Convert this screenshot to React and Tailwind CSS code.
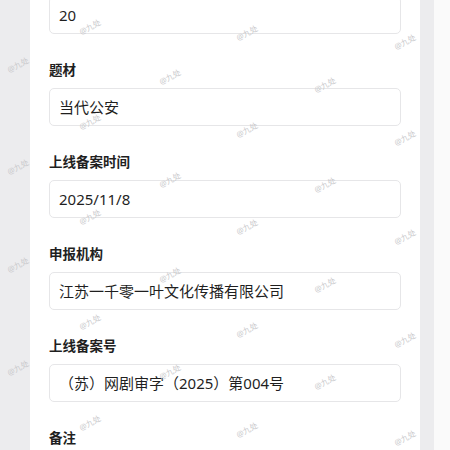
const fields = [
  { label: "题材", value: "当代公安" },
  { label: "上线备案时间", value: "2025/11/8" },
  { label: "申报机构", value: "江苏一千零一叶文化传播有限公司" },
  { label: "上线备案号", value: "（苏）网剧审字（2025）第004号" },
];

const marks = [
  [90, 27], [247, 33], [405, 42],
  [18, 65], [170, 77], [325, 85],
  [90, 122], [247, 130], [405, 138],
  [18, 167], [170, 180], [325, 185],
  [90, 217], [247, 227], [405, 237],
  [18, 265], [170, 275], [325, 285],
  [90, 322], [247, 330], [405, 340],
  [18, 368], [170, 372], [325, 382],
  [90, 423], [247, 430], [405, 438],
];

export default function App() {
  return (
    <div
      className="relative flex h-[450px] w-[450px] overflow-hidden bg-white text-[#1f1f1f]"
      style={{ fontFamily: '"Noto Sans", "Noto Sans CJK SC", sans-serif' }}
    >
      <div className="w-[30px] shrink-0 bg-[#ececee]" />
      <div className="w-[390px] shrink-0 bg-white px-[19px]">
        <div className="-mt-1 flex h-[38px] items-center rounded-[5px] border border-[#e6e6e8] px-[9px] text-[15px]">
          20
        </div>
        {fields.map((f) => (
          <div key={f.label} className="mt-[26px]">
            <div className="mb-2 h-5 text-[13.5px] font-bold leading-5">{f.label}</div>
            <div className="flex h-[38px] items-center rounded-[5px] border border-[#e6e6e8] px-[9px] text-[15px]">
              {f.value}
            </div>
          </div>
        ))}
        <div className="mt-[26px] h-5 text-[13.5px] font-bold leading-5">备注</div>
      </div>
      <div className="w-[14px] shrink-0 bg-[#ececee]" />
      <div className="flex-1 bg-[#fafafa]" />

      {marks.map(([x, y]) => (
        <span
          key={`${x}-${y}`}
          className="pointer-events-none absolute -translate-x-1/2 -translate-y-1/2 -rotate-[28deg] text-[8px] leading-none text-[#c9c9cc]"
          style={{ left: x, top: y }}
        >
          @九处
        </span>
      ))}
    </div>
  );
}
